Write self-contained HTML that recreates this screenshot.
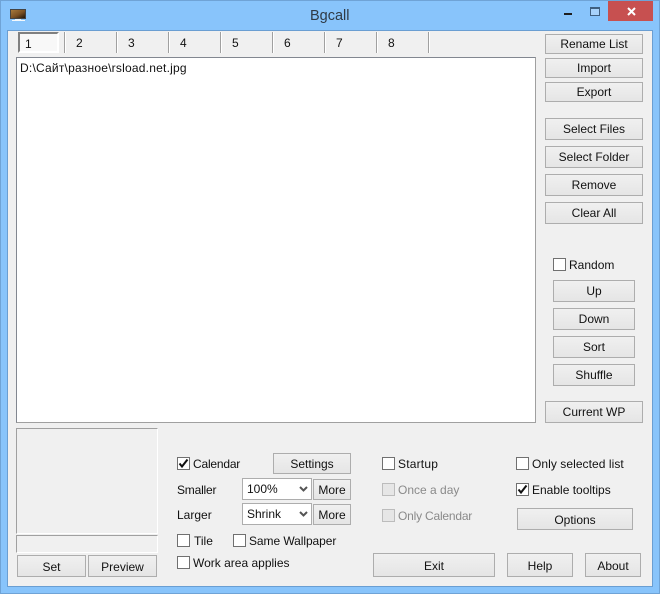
<!DOCTYPE html>
<html><head><meta charset="utf-8"><style>
html,body{margin:0;padding:0}
body{width:660px;height:594px;overflow:hidden;position:relative;background:#88c4fb;font-family:"Liberation Sans","DejaVu Sans",sans-serif;font-size:12px;color:#111}
#edge{position:absolute;left:0;top:0;width:658px;height:592px;border:1px solid #6fa3d6}
#client{position:absolute;left:7px;top:30px;width:644px;height:555px;background:#f0f0f0;border:1px solid #6a9ed2}
.a{position:absolute;white-space:nowrap;letter-spacing:0;line-height:14px}
.b{position:absolute;box-sizing:border-box;border:1px solid #adadad;background:linear-gradient(#f0f0f0,#e5e5e5);text-align:center;white-space:nowrap;letter-spacing:0}
.c{position:absolute;box-sizing:border-box;width:13px;height:13px;border:1px solid #707070;background:#fff}
.c.d{background:#e6e6e6;border-color:#bcbcbc}
.c svg{position:absolute;left:0;top:0}
.s{position:absolute;width:2px;height:21px;top:32px;background:linear-gradient(90deg,#a0a0a0 50%,#fff 50%)}
.g{color:#8a8a8a}
</style></head><body>
<div id="edge"></div>
<div id="client"></div>

<svg style="position:absolute;left:10px;top:9px" width="16" height="13" viewBox="0 0 16 13"><defs><linearGradient id="m" x1="0" y1="0" x2="1" y2="1"><stop offset="0" stop-color="#a87a3c"/><stop offset=".55" stop-color="#7a5024"/><stop offset="1" stop-color="#20140a"/></linearGradient></defs><rect x="0.500" y="0.500" width="15" height="9" fill="#1c1c1c" stroke="#444"/><rect x="1" y="1" width="14" height="8" fill="url(#m)"/><rect x="5" y="10" width="6" height="1" fill="#eaf4fb"/><rect x="2" y="11" width="13" height="1" fill="#f4f8fb"/></svg>
<div class="a" style="left:310px;top:8px;font-size:14.500px;line-height:17px;color:#2f3a46">Bgcall</div>

<div style="position:absolute;left:564px;top:13px;width:8px;height:2px;background:#1e1e1e"></div>
<div style="position:absolute;left:590px;top:7px;width:8px;height:6px;border:1px solid #3f5f80;border-top-width:2px;background:#a7d2fb"></div>
<div style="position:absolute;left:608px;top:1px;width:45px;height:20px;background:#c75050"></div>
<svg style="position:absolute;left:627px;top:7px" width="9" height="9" viewBox="0 0 9 9"><path d="M1 1L8 8M8 1L1 8" stroke="#fff" stroke-width="2"/></svg>

<div style="position:absolute;left:18px;top:32px;width:41px;height:21px;box-sizing:border-box;border:2px solid;border-color:#808080 #fff #fff #808080;background:#f8f8f8"></div>
<div class="a" style="left:25px;top:37px">1</div>
<div class="s" style="left:64px"></div><div class="a" style="left:76px;top:36px">2</div>
<div class="s" style="left:116px"></div><div class="a" style="left:128px;top:36px">3</div>
<div class="s" style="left:168px"></div><div class="a" style="left:180px;top:36px">4</div>
<div class="s" style="left:220px"></div><div class="a" style="left:232px;top:36px">5</div>
<div class="s" style="left:272px"></div><div class="a" style="left:284px;top:36px">6</div>
<div class="s" style="left:324px"></div><div class="a" style="left:336px;top:36px">7</div>
<div class="s" style="left:376px"></div><div class="a" style="left:388px;top:36px">8</div>
<div class="s" style="left:428px"></div>

<div style="position:absolute;left:16px;top:57px;width:520px;height:366px;box-sizing:border-box;background:#fff;border:1px solid;border-color:#828790 #a0a0a0 #a0a0a0 #828790"></div>
<div class="a" style="left:20px;top:61px;letter-spacing:.22px;font-family:'Liberation Sans','Noto Sans CJK SC',sans-serif">D:\Сайт\разное\rsload.net.jpg</div>

<div class="b" style="left:545px;top:34px;width:98px;height:20px;line-height:19px">Rename List</div>
<div class="b" style="left:545px;top:58px;width:98px;height:20px;line-height:19px">Import</div>
<div class="b" style="left:545px;top:82px;width:98px;height:20px;line-height:19px">Export</div>
<div class="b" style="left:545px;top:118px;width:98px;height:22px;line-height:21px">Select Files</div>
<div class="b" style="left:545px;top:146px;width:98px;height:22px;line-height:21px">Select Folder</div>
<div class="b" style="left:545px;top:174px;width:98px;height:22px;line-height:21px">Remove</div>
<div class="b" style="left:545px;top:202px;width:98px;height:22px;line-height:21px">Clear All</div>

<div class="c" style="left:553px;top:258px"></div>
<div class="a" style="left:569px;top:258px">Random</div>
<div class="b" style="left:553px;top:280px;width:82px;height:22px;line-height:21px">Up</div>
<div class="b" style="left:553px;top:308px;width:82px;height:22px;line-height:21px">Down</div>
<div class="b" style="left:553px;top:336px;width:82px;height:22px;line-height:21px">Sort</div>
<div class="b" style="left:553px;top:364px;width:82px;height:22px;line-height:21px">Shuffle</div>
<div class="b" style="left:545px;top:401px;width:98px;height:22px;line-height:21px">Current WP</div>

<div style="position:absolute;left:16px;top:428px;width:142px;height:106px;box-sizing:border-box;border:1px solid;border-color:#a0a0a0 #fff #fff #a0a0a0"></div>
<div style="position:absolute;left:16px;top:535px;width:142px;height:18px;box-sizing:border-box;border:1px solid;border-color:#a0a0a0 #fff #fff #a0a0a0"></div>
<div class="b" style="left:17px;top:555px;width:69px;height:22px;line-height:22px">Set</div>
<div class="b" style="left:88px;top:555px;width:69px;height:22px;line-height:22px">Preview</div>

<div class="c" style="left:177px;top:457px"><svg width="11" height="11" viewBox="0 0 11 11"><path d="M1.500 5.500L4 8.500L9.500 1.500" fill="none" stroke="#111" stroke-width="2"/></svg></div>
<div class="a" style="left:193px;top:457px;letter-spacing:-.2px">Calendar</div>
<div class="b" style="left:273px;top:453px;width:78px;height:21px;line-height:20px">Settings</div>
<div class="a" style="left:177px;top:483px;letter-spacing:-.2px">Smaller</div>
<div class="a" style="left:177px;top:508px">Larger</div>

<div class="a" style="left:242px;top:478px;width:70px;height:22px;box-sizing:border-box;border:1px solid #adadad;background:#fff;padding:3px 0 0 4px">100%</div>
<svg style="position:absolute;left:299px;top:486px" width="9" height="6" viewBox="0 0 9 6"><path d="M1 1L4.500 4.500L8 1" fill="none" stroke="#555" stroke-width="2"/></svg>
<div class="a" style="left:242px;top:503px;width:70px;height:22px;box-sizing:border-box;border:1px solid #adadad;background:#fff;padding:3px 0 0 4px">Shrink</div>
<svg style="position:absolute;left:299px;top:511px" width="9" height="6" viewBox="0 0 9 6"><path d="M1 1L4.500 4.500L8 1" fill="none" stroke="#555" stroke-width="2"/></svg>
<div class="b" style="left:313px;top:479px;width:38px;height:21px;line-height:20px">More</div>
<div class="b" style="left:313px;top:504px;width:38px;height:21px;line-height:20px">More</div>

<div class="c" style="left:177px;top:534px"></div>
<div class="a" style="left:194px;top:534px">Tile</div>
<div class="c" style="left:233px;top:534px"></div>
<div class="a" style="left:249px;top:534px;letter-spacing:-.07px">Same Wallpaper</div>
<div class="c" style="left:177px;top:556px"></div>
<div class="a" style="left:193px;top:556px">Work area applies</div>

<div class="c" style="left:382px;top:457px"></div>
<div class="a" style="left:398px;top:457px;letter-spacing:.2px">Startup</div>
<div class="c d" style="left:382px;top:483px"></div>
<div class="a g" style="left:398px;top:483px">Once a day</div>
<div class="c d" style="left:382px;top:509px"></div>
<div class="a g" style="left:398px;top:509px;letter-spacing:-.2px">Only Calendar</div>

<div class="c" style="left:516px;top:457px"></div>
<div class="a" style="left:532px;top:457px;letter-spacing:.06px">Only selected list</div>
<div class="c" style="left:516px;top:483px"><svg width="11" height="11" viewBox="0 0 11 11"><path d="M1.500 5.500L4 8.500L9.500 1.500" fill="none" stroke="#111" stroke-width="2"/></svg></div>
<div class="a" style="left:532px;top:483px">Enable tooltips</div>
<div class="b" style="left:517px;top:508px;width:116px;height:22px;line-height:22px">Options</div>

<div class="b" style="left:373px;top:553px;width:122px;height:24px;line-height:24px">Exit</div>
<div class="b" style="left:507px;top:553px;width:66px;height:24px;line-height:24px">Help</div>
<div class="b" style="left:585px;top:553px;width:56px;height:24px;line-height:24px">About</div>
</body></html>
